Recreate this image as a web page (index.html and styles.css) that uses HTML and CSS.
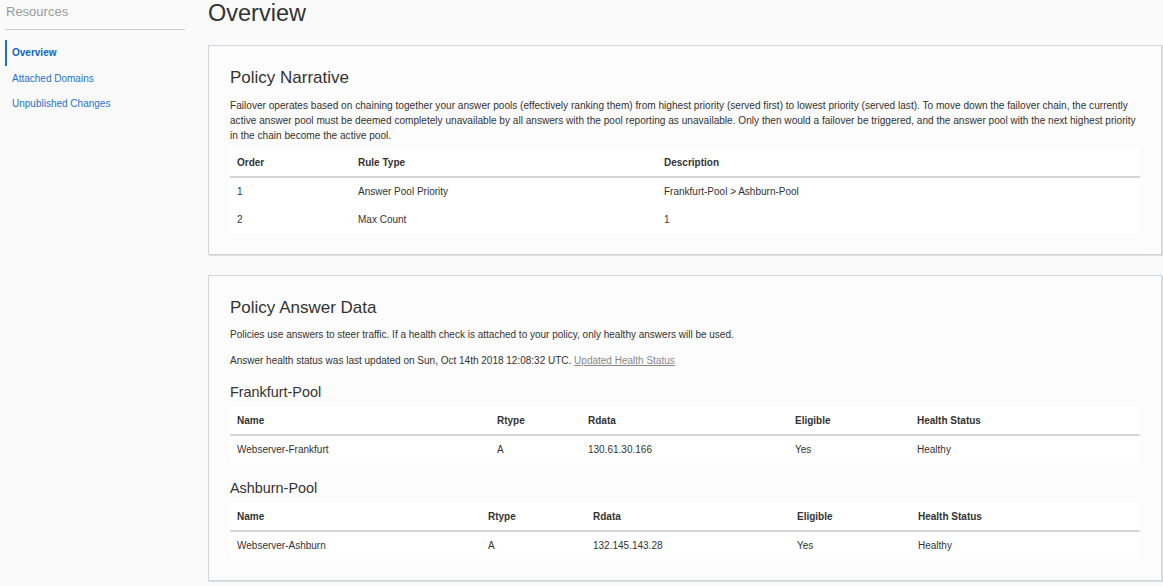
FILE: index.html
```html
<!DOCTYPE html>
<html>
<head>
<meta charset="utf-8">
<link rel="stylesheet" href="styles.css">
</head>
<body>
<div class="layout">
  <aside class="sidebar">
    <div class="side-title">Resources</div>
    <nav class="side-nav">
      <a class="nav-item active">Overview</a>
      <a class="nav-item">Attached Domains</a>
      <a class="nav-item">Unpublished Changes</a>
    </nav>
  </aside>
  <main class="main">
    <h1 class="page-title">Overview</h1>
    <section class="card card-narrative">
      <h2 class="card-title">Policy Narrative</h2>
      <p class="text narrative">Failover operates based on chaining together your answer pools (effectively ranking them) from highest priority (served first) to lowest priority (served last). To move down the failover chain, the currently active answer pool must be deemed completely unavailable by all answers with the pool reporting as unavailable. Only then would a failover be triggered, and the answer pool with the next highest priority in the chain become the active pool.</p>
      <table class="tbl tbl-rules">
        <colgroup><col class="c-order"><col class="c-rule"><col></colgroup>
        <thead><tr><th>Order</th><th>Rule Type</th><th>Description</th></tr></thead>
        <tbody>
          <tr><td>1</td><td>Answer Pool Priority</td><td>Frankfurt-Pool &gt; Ashburn-Pool</td></tr>
          <tr><td>2</td><td>Max Count</td><td>1</td></tr>
        </tbody>
      </table>
    </section>
    <section class="card card-answers">
      <h2 class="card-title">Policy Answer Data</h2>
      <p class="text intro">Policies use answers to steer traffic. If a health check is attached to your policy, only healthy answers will be used.</p>
      <p class="text intro">Answer health status was last updated on Sun, Oct 14th 2018 12:08:32 UTC. <a class="muted-link">Updated Health Status</a></p>
      <h3 class="pool-title">Frankfurt-Pool</h3>
      <table class="tbl tbl-pool">
        <colgroup><col class="f1"><col class="f2"><col class="f3"><col class="f4"><col></colgroup>
        <thead><tr><th>Name</th><th>Rtype</th><th>Rdata</th><th>Eligible</th><th>Health Status</th></tr></thead>
        <tbody><tr><td>Webserver-Frankfurt</td><td>A</td><td>130.61.30.166</td><td>Yes</td><td>Healthy</td></tr></tbody>
      </table>
      <h3 class="pool-title">Ashburn-Pool</h3>
      <table class="tbl tbl-pool">
        <colgroup><col class="a1"><col class="a2"><col class="a3"><col class="a4"><col></colgroup>
        <thead><tr><th>Name</th><th>Rtype</th><th>Rdata</th><th>Eligible</th><th>Health Status</th></tr></thead>
        <tbody><tr><td>Webserver-Ashburn</td><td>A</td><td>132.145.143.28</td><td>Yes</td><td>Healthy</td></tr></tbody>
      </table>
    </section>
  </main>
</div>
</body>
</html>
```

FILE: styles.css
```css
* { box-sizing: border-box; }
html, body { margin: 0; padding: 0; }
body {
  font-family: "Liberation Sans", Arial, Helvetica, sans-serif;
  color: #333;
  background: #fafafa;
  width: 1163px;
  height: 586px;
  overflow: hidden;
}
.layout { display: flex; align-items: flex-start; }
.sidebar {
  width: 180px;
  margin-left: 5px;
  flex: none;
}
.side-title {
  font-size: 13px;
  line-height: 16px;
  color: #9a9a9a;
  padding: 4px 0 0 1px;
  height: 30px;
  border-bottom: 1px solid #c9cdd1;
}
.side-nav { display: flex; flex-direction: column; padding-top: 10px; }
.nav-item {
  display: block;
  font-size: 10px;
  line-height: 25px;
  height: 25.5px;
  padding-left: 5px;
  color: #1a73c9;
  border-left: 2px solid transparent;
}
.nav-item.active { font-weight: bold; border-left-color: #1a73c9; color: #0f64b8; }
.main { flex: 1; margin-left: 23px; padding-right: 1px; }
.page-title {
  margin: 0;
  font-weight: normal;
  font-size: 23.5px;
  line-height: 26px;
  height: 45px;
  color: #333;
}
.card {
  background: #fcfcfc;
  border: 1px solid #d3d6da;
  box-shadow: 1px 1px 0 #dcdfe2;
  padding: 22px 21px 21px 21px;
}
.card + .card { margin-top: 20px; }
.card-title {
  margin: 0;
  font-weight: normal;
  font-size: 17px;
  line-height: 20px;
  color: #333;
}
.text { margin: 0; font-size: 10px; color: #333; }
.narrative { font-size: 10.1px; line-height: 15px; margin-top: 10px; margin-bottom: 6px; }
.intro { line-height: 14px; margin-top: 12px; }
.card-title + .intro { margin-top: 10px; }
.muted-link { color: #888; text-decoration: underline; }
.pool-title {
  margin: 15px 0 6px;
  font-weight: normal;
  font-size: 14.4px;
  line-height: 18px;
  color: #333;
}
.tbl + .pool-title { margin-top: 16px; }
.tbl {
  width: 910px;
  border-collapse: collapse;
  background: #fff;
  table-layout: fixed;
  font-size: 10px;
  color: #333;
}
.tbl th {
  text-align: left;
  font-weight: bold;
  height: 28px;
  padding: 0 7px;
  border-bottom: 2px solid #d4d6d9;
}
.tbl td { height: 28px; padding: 0 7px; }
.c-order { width: 121px; }
.c-rule { width: 306px; }
.f1 { width: 260px; }
.f2 { width: 91px; }
.f3 { width: 207px; }
.f4 { width: 122px; }
.a1 { width: 251px; }
.a2 { width: 105px; }
.a3 { width: 204px; }
.a4 { width: 121px; }
```
